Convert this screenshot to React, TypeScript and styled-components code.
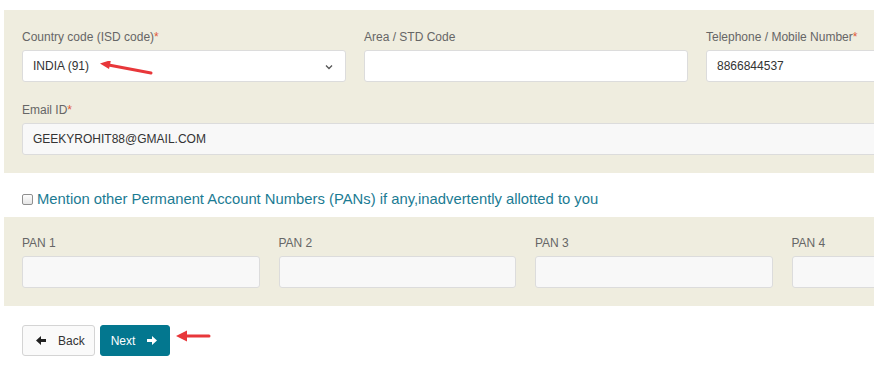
import React from "react";
import styled, { createGlobalStyle } from "styled-components";

const Global = createGlobalStyle`
  html, body { margin: 0; padding: 0; background: #fff; overflow: hidden; }
  body { font-family: "Liberation Sans", Arial, sans-serif; }
  * { box-sizing: border-box; }
`;

const Page = styled.div`
  width: 874px;
  height: 367px;
  overflow: hidden;
  padding: 10px 0 0 4px;
`;

const Panel = styled.div<{ $pad: string }>`
  background: #efeddf;
  width: 1100px;
  padding: ${(p) => p.$pad};
  display: flex;
  flex-direction: column;
  gap: 21px;
`;

const Grid = styled.div<{ $cols: string; $gap: string }>`
  display: grid;
  grid-template-columns: ${(p) => p.$cols};
  column-gap: ${(p) => p.$gap};
`;

const Field = styled.div`
  display: flex;
  flex-direction: column;
  position: relative;
`;

const Label = styled.label`
  font-size: 12px;
  line-height: 14px;
  color: #666;
  margin-bottom: 6px;
`;

const Req = styled.span`
  color: #e05a3a;
`;

const Input = styled.div<{ $bg?: string }>`
  height: 32px;
  border: 1px solid #dcdcdc;
  border-radius: 3px;
  background: ${(p) => p.$bg || "#fff"};
  font-size: 12px;
  color: #333;
  display: flex;
  align-items: center;
  padding: 0 10px;
  position: relative;
`;

const Chevron = styled.svg`
  position: absolute;
  right: 12px;
  top: 13px;
`;

const Annot = styled.svg`
  position: absolute;
  pointer-events: none;
`;

const CheckRow = styled.div`
  height: 44px;
  display: flex;
  align-items: center;
  padding-left: 18px;
  padding-top: 8px;
  gap: 4px;
`;

const Box = styled.span`
  width: 11px;
  height: 11px;
  border: 1px solid #8f8f8f;
  border-radius: 2px;
  background: linear-gradient(#fdfdfd, #e6e6e6);
  display: inline-block;
`;

const CheckText = styled.span`
  font-size: 14.8px;
  color: #1b7b93;
`;

const Actions = styled.div`
  display: flex;
  gap: 5px;
  padding: 19px 0 0 18px;
  position: relative;
`;

const Button = styled.button<{ $primary?: boolean }>`
  height: 31px;
  border-radius: 3px;
  border: 1px solid ${(p) => (p.$primary ? "#03778f" : "#d4d4d4")};
  background: ${(p) => (p.$primary ? "#03778f" : "#fafafa")};
  color: ${(p) => (p.$primary ? "#fff" : "#333")};
  font-family: "Liberation Sans", Arial, sans-serif;
  font-size: 12px;
  font-weight: 400;
  display: flex;
  align-items: center;
  gap: 12px;
  padding: ${(p) => (p.$primary ? "0 12px 0 10px" : "0 9px 0 13px")};
  cursor: pointer;
`;

const ArrowIcon = ({ dir, color }: { dir: "left" | "right"; color: string }) => (
  <svg width="10" height="9" viewBox="0 0 10 9" style={{ transform: dir === "left" ? "scaleX(-1)" : undefined }}>
    <path d="M0 3 H5 V0 L10 4.5 L5 9 V6 H0 Z" fill={color} />
  </svg>
);

export default function App() {
  return (
    <>
      <Global />
      <Page>
        <Panel $pad="20px 0 18px 18px">
          <Grid $cols="324px 324px 324px" $gap="18px">
            <Field>
              <Label>
                Country code (ISD code)<Req>*</Req>
              </Label>
              <Input>
                INDIA (91)
                <Chevron width="8" height="6" viewBox="0 0 8 6">
                  <path d="M1 1.5 L4 4.5 L7 1.5" stroke="#555" strokeWidth="1.3" fill="none" />
                </Chevron>
              </Input>
              <Annot width="60" height="20" viewBox="0 0 60 20" style={{ left: 74, top: 31 }}>
                <path d="M55 12 L10 3.5" stroke="#e8373a" strokeWidth="3" strokeLinecap="round" />
                <path d="M4 2.5 L15 -1 L13 8 Z" fill="#e8373a" />
              </Annot>
            </Field>
            <Field>
              <Label>Area / STD Code</Label>
              <Input />
            </Field>
            <Field>
              <Label>
                Telephone / Mobile Number<Req>*</Req>
              </Label>
              <Input>8866844537</Input>
            </Field>
          </Grid>
          <Field>
            <Label>
              Email ID<Req>*</Req>
            </Label>
            <Input $bg="#f8f8f8">GEEKYROHIT88@GMAIL.COM</Input>
          </Field>
        </Panel>
        <CheckRow>
          <Box />
          <CheckText>Mention other Permanent Account Numbers (PANs) if any,inadvertently allotted to you</CheckText>
        </CheckRow>
        <Panel $pad="19px 0 18px 18px">
          <Grid $cols="237.5px 237.5px 237.5px 237.5px" $gap="19px">
            {["PAN 1", "PAN 2", "PAN 3", "PAN 4"].map((p) => (
              <Field key={p}>
                <Label>{p}</Label>
                <Input $bg="#f8f8f8" />
              </Field>
            ))}
          </Grid>
        </Panel>
        <Actions>
          <Button>
            <ArrowIcon dir="left" color="#222" />
            Back
          </Button>
          <Button $primary>
            Next
            <ArrowIcon dir="right" color="#fff" />
          </Button>
          <Annot width="40" height="14" viewBox="0 0 40 14" style={{ left: 169, top: 23 }}>
            <path d="M36 7 H10" stroke="#e8373a" strokeWidth="3" strokeLinecap="round" />
            <path d="M3 7 L14 1.5 L14 12.5 Z" fill="#e8373a" />
          </Annot>
        </Actions>
      </Page>
    </>
  );
}
